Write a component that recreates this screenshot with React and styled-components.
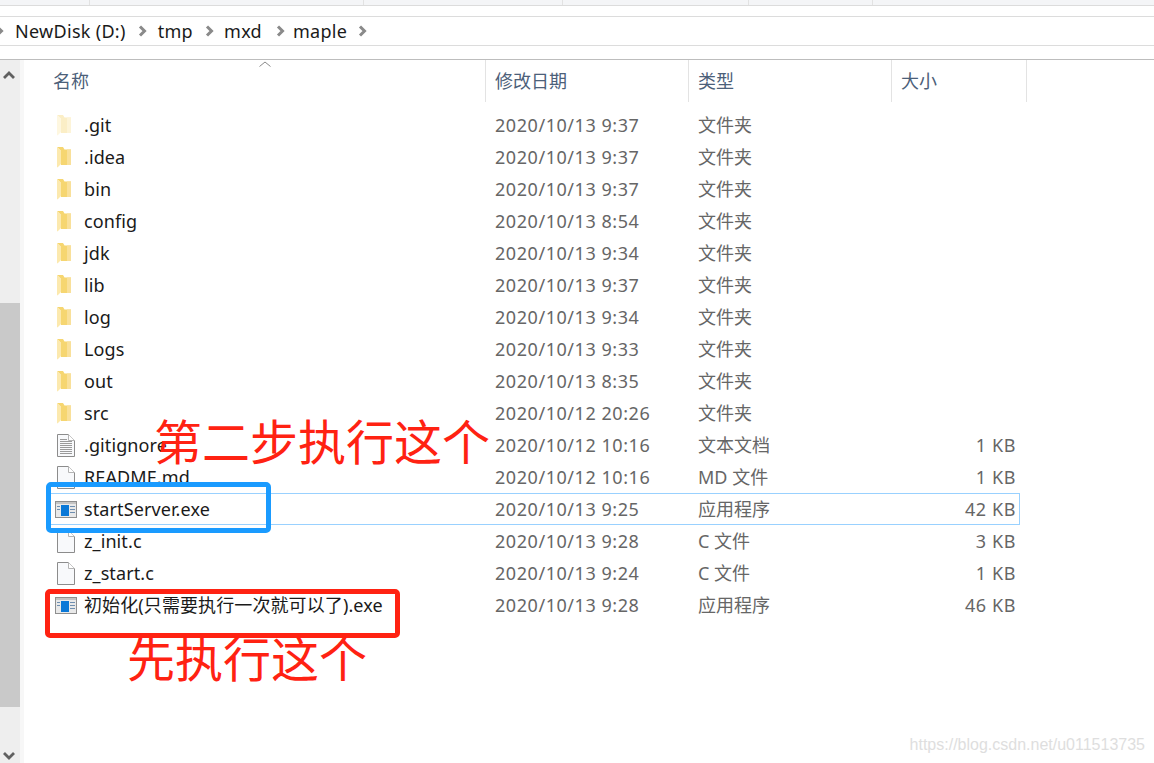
import React from "react";
import styled, { createGlobalStyle } from "styled-components";

const GlobalStyle = createGlobalStyle`
  html, body {
    margin: 0;
    padding: 0;
    height: 100%;
    overflow: hidden;
    background: #fff;
  }
  #root {
    height: 100%;
  }
`;

const FONT = `"Noto Sans", "Noto Sans CJK SC", sans-serif`;

const Page = styled.div`
  position: relative;
  width: 1154px;
  height: 763px;
  overflow: hidden;
  display: flex;
  flex-direction: column;
  font-family: ${FONT};
  font-size: 18px;
  color: #1a1a1a;
`;

const ToolStrip = styled.div`
  height: 5px;
  flex: none;
  background: #f4f5f7;
  border-bottom: 1px solid #dcdcdc;
  display: flex;
`;

const ToolCell = styled.div`
  width: ${(p) => p.$w}px;
  flex: none;
  border-right: 1px solid #e2e2e2;
  box-sizing: border-box;
`;

const Spacer = styled.div`
  height: 10px;
  flex: none;
  border-bottom: 1px solid #dcdcdc;
`;

const AddressBar = styled.div`
  height: 28px;
  flex: none;
  border-bottom: 1px solid #dcdcdc;
  display: flex;
  align-items: center;
  overflow: hidden;
  margin-left: -5px;
`;

const Crumb = styled.span`
  margin-left: ${(p) => p.$gap || 0}px;
  line-height: 28px;
  letter-spacing: 0.3px;
  white-space: nowrap;
`;

const CrumbChevron = styled.svg`
  width: 9px;
  height: 12px;
  flex: none;
  margin-left: ${(p) => p.$gap || 0}px;
`;

const AddressGap = styled.div`
  height: 13px;
  flex: none;
  border-bottom: 1px solid #bdbdbd;
`;

const Body = styled.div`
  flex: 1;
  display: flex;
  min-height: 0;
`;

const Scrollbar = styled.div`
  width: 20px;
  flex: none;
  background: #eeeeee;
  border-right: 4px solid #f7f7f7;
  display: flex;
  flex-direction: column;
  align-items: center;
`;

const ScrollArrow = styled.svg`
  width: 12px;
  height: 8px;
  flex: none;
  margin-top: ${(p) => p.$top}px;
  margin-right: 3px;
`;

const ScrollThumb = styled.div`
  width: 100%;
  height: 404px;
  flex: none;
  background: #c9c9c9;
  margin-top: ${(p) => p.$top}px;
`;

const Listing = styled.div`
  flex: 1;
  min-width: 0;
  padding-left: 24px;
`;

const HeaderRow = styled.div`
  display: grid;
  grid-template-columns: 438px 203px 203px 135px;
  height: 40px;
`;

const HeaderCell = styled.div`
  border-right: 1px solid #e3e3e3;
  padding-left: ${(p) => p.$pad}px;
  box-sizing: border-box;
  line-height: 42px;
  color: #4c6079;
  position: relative;
`;

const SortCaret = styled.svg`
  position: absolute;
  top: 1px;
  left: 210px;
  width: 14px;
  height: 6px;
`;

const Rows = styled.div`
  padding-top: 9px;
`;

const Row = styled.div`
  display: grid;
  grid-template-columns: 437px 203px 203px 124px;
  height: 32px;
  width: 972px;
  box-sizing: border-box;
  align-items: center;
  border: 1px solid ${(p) => (p.$selected ? "#99d1ff" : "transparent")};
  line-height: 30px;
`;

const NameCell = styled.div`
  display: flex;
  align-items: center;
  min-width: 0;
`;

const IconSlot = styled.div`
  width: 35px;
  flex: none;
  display: flex;
  padding-left: ${(p) => (p.$wide ? 6 : 8)}px;
  box-sizing: border-box;
`;

const FileName = styled.span`
  white-space: nowrap;
  letter-spacing: 0.1px;
`;

const DateCell = styled.div`
  padding-left: 9px;
  color: #666;
  letter-spacing: 0.55px;
  white-space: nowrap;
`;

const TypeCell = styled.div`
  padding-left: 9px;
  color: #666;
  white-space: nowrap;
`;

const SizeCell = styled.div`
  color: #666;
  text-align: right;
  letter-spacing: 0.6px;
  white-space: nowrap;
`;

const Frame = styled.div`
  position: absolute;
  left: ${(p) => p.$x}px;
  top: ${(p) => p.$y}px;
  width: ${(p) => p.$w}px;
  height: ${(p) => p.$h}px;
  box-sizing: border-box;
  border: 5px solid ${(p) => p.$color};
  border-radius: 5px;
`;

const Note = styled.div`
  position: absolute;
  left: ${(p) => p.$x}px;
  top: ${(p) => p.$y}px;
  font-family: "Noto Sans CJK SC", sans-serif;
  font-size: 48px;
  line-height: 56px;
  color: #ff2212;
  white-space: nowrap;
`;

const Watermark = styled.div`
  position: absolute;
  right: 9px;
  bottom: 8px;
  font-family: "Liberation Sans", sans-serif;
  font-size: 16px;
  line-height: 20px;
  color: #dedede;
`;

const FolderIcon = ({ faded }) => (
  <svg width="15" height="21" viewBox="0 0 15 21">
    <path d="M0 0h6l1.5 2.5H14V18H4V4z" fill={faded ? "#fbeec6" : "#f6d671"} />
    <path d="M10 2.5h4V18h-4z" fill={faded ? "#fdf4d8" : "#f9e09a"} />
    <path d="M0 0l4 3.5V17l-3.5 3.5L0 20z" fill={faded ? "#fef7e0" : "#fce9ae"} />
  </svg>
);

const PageIcon = ({ lines }) => (
  <svg width="18" height="23" viewBox="0 0 18 23">
    <path d="M.5.5h11l6 6v16H.5z" fill="#f8f9fb" stroke="#8c8c8c" />
    <path d="M11.5.5v6h6" fill="#fff" stroke="#b4b4b4" />
    {lines &&
      [5, 7, 9, 11, 13, 15, 17, 19].map((y) => (
        <path key={y} d={`M3 ${y + 0.5}h${y < 7 ? 7 : 12}`} stroke="#9a9a9a" />
      ))}
  </svg>
);

const ExeIcon = () => (
  <svg width="22" height="17" viewBox="0 0 22 17">
    <rect x=".5" y=".5" width="21" height="16" fill="#e9e9e9" stroke="#8f8f8f" />
    <rect x="1" y="1" width="20" height="2" fill="#c4c4c4" />
    <rect x="6" y="4" width="8" height="11" fill="#0a78d7" />
    <path d="M2 5.5h3M2 8.5h3M15 5.5h5M15 8.5h5M15 11.5h5" stroke="#6f8fb0" />
  </svg>
);

const files = [
  { name: ".git", date: "2020/10/13 9:37", type: "文件夹", icon: "faded" },
  { name: ".idea", date: "2020/10/13 9:37", type: "文件夹", icon: "folder" },
  { name: "bin", date: "2020/10/13 9:37", type: "文件夹", icon: "folder" },
  { name: "config", date: "2020/10/13 8:54", type: "文件夹", icon: "folder" },
  { name: "jdk", date: "2020/10/13 9:34", type: "文件夹", icon: "folder" },
  { name: "lib", date: "2020/10/13 9:37", type: "文件夹", icon: "folder" },
  { name: "log", date: "2020/10/13 9:34", type: "文件夹", icon: "folder" },
  { name: "Logs", date: "2020/10/13 9:33", type: "文件夹", icon: "folder" },
  { name: "out", date: "2020/10/13 8:35", type: "文件夹", icon: "folder" },
  { name: "src", date: "2020/10/12 20:26", type: "文件夹", icon: "folder" },
  { name: ".gitignore", date: "2020/10/12 10:16", type: "文本文档", size: "1 KB", icon: "text" },
  { name: "README.md", date: "2020/10/12 10:16", type: "MD 文件", size: "1 KB", icon: "page" },
  { name: "startServer.exe", date: "2020/10/13 9:25", type: "应用程序", size: "42 KB", icon: "exe", selected: true },
  { name: "z_init.c", date: "2020/10/13 9:28", type: "C 文件", size: "3 KB", icon: "page" },
  { name: "z_start.c", date: "2020/10/13 9:24", type: "C 文件", size: "1 KB", icon: "page" },
  { name: "初始化(只需要执行一次就可以了).exe", date: "2020/10/13 9:28", type: "应用程序", size: "46 KB", icon: "exe" },
];

const renderIcon = (icon) => {
  if (icon === "faded") return <FolderIcon faded />;
  if (icon === "folder") return <FolderIcon />;
  if (icon === "text") return <PageIcon lines />;
  if (icon === "page") return <PageIcon />;
  return <ExeIcon />;
};

const Chevron = ({ gap }) => (
  <CrumbChevron $gap={gap} viewBox="0 0 9 12">
    <path d="M2 1.5 6.5 6 2 10.5" fill="none" stroke="#8a8a8a" strokeWidth="3" />
  </CrumbChevron>
);

const App = () => {
  return (
    <Page>
      <GlobalStyle />
      <ToolStrip>
        <ToolCell $w={90} />
        <ToolCell $w={274} />
        <ToolCell $w={199} />
        <ToolCell $w={186} />
        <ToolCell $w={124} />
      </ToolStrip>
      <Spacer />
      <AddressBar>
        <Chevron />
        <Crumb $gap={11}>NewDisk (D:)</Crumb>
        <Chevron gap={12} />
        <Crumb $gap={11}>tmp</Crumb>
        <Chevron gap={12} />
        <Crumb $gap={10}>mxd</Crumb>
        <Chevron gap={14} />
        <Crumb $gap={8}>maple</Crumb>
        <Chevron gap={11} />
      </AddressBar>
      <AddressGap />
      <Body>
        <Scrollbar>
          <ScrollArrow $top={11} viewBox="0 0 12 8">
            <path d="M1 7 6 2l5 5" fill="none" stroke="#606060" strokeWidth="2.8" />
          </ScrollArrow>
          <ScrollThumb $top={224} />
          <ScrollArrow $top={45} viewBox="0 0 12 8">
            <path d="M1 1l5 5 5-5" fill="none" stroke="#606060" strokeWidth="2.8" />
          </ScrollArrow>
        </Scrollbar>
        <Listing>
          <HeaderRow>
            <HeaderCell $pad={5}>
              名称
              <SortCaret viewBox="0 0 14 6">
                <path d="M1.5 5.5 7 1l5.5 4.5" fill="none" stroke="#8a8a8a" />
              </SortCaret>
            </HeaderCell>
            <HeaderCell $pad={9}>修改日期</HeaderCell>
            <HeaderCell $pad={9}>类型</HeaderCell>
            <HeaderCell $pad={9}>大小</HeaderCell>
          </HeaderRow>
          <Rows>
            {files.map((file) => (
              <Row key={file.name} $selected={file.selected}>
                <NameCell>
                  <IconSlot $wide={file.icon === "exe"}>{renderIcon(file.icon)}</IconSlot>
                  <FileName>{file.name}</FileName>
                </NameCell>
                <DateCell>{file.date}</DateCell>
                <TypeCell>{file.type}</TypeCell>
                <SizeCell>{file.size}</SizeCell>
              </Row>
            ))}
          </Rows>
        </Listing>
      </Body>
      <Frame $x={46} $y={482} $w={225} $h={51} $color="#1a9bff" />
      <Frame $x={45} $y={589} $w={355} $h={49} $color="#ff2212" />
      <Note $x={154} $y={411}>第二步执行这个</Note>
      <Note $x={127} $y={628}>先执行这个</Note>
      <Watermark>https://blog.csdn.net/u011513735</Watermark>
    </Page>
  );
};

export default App;
